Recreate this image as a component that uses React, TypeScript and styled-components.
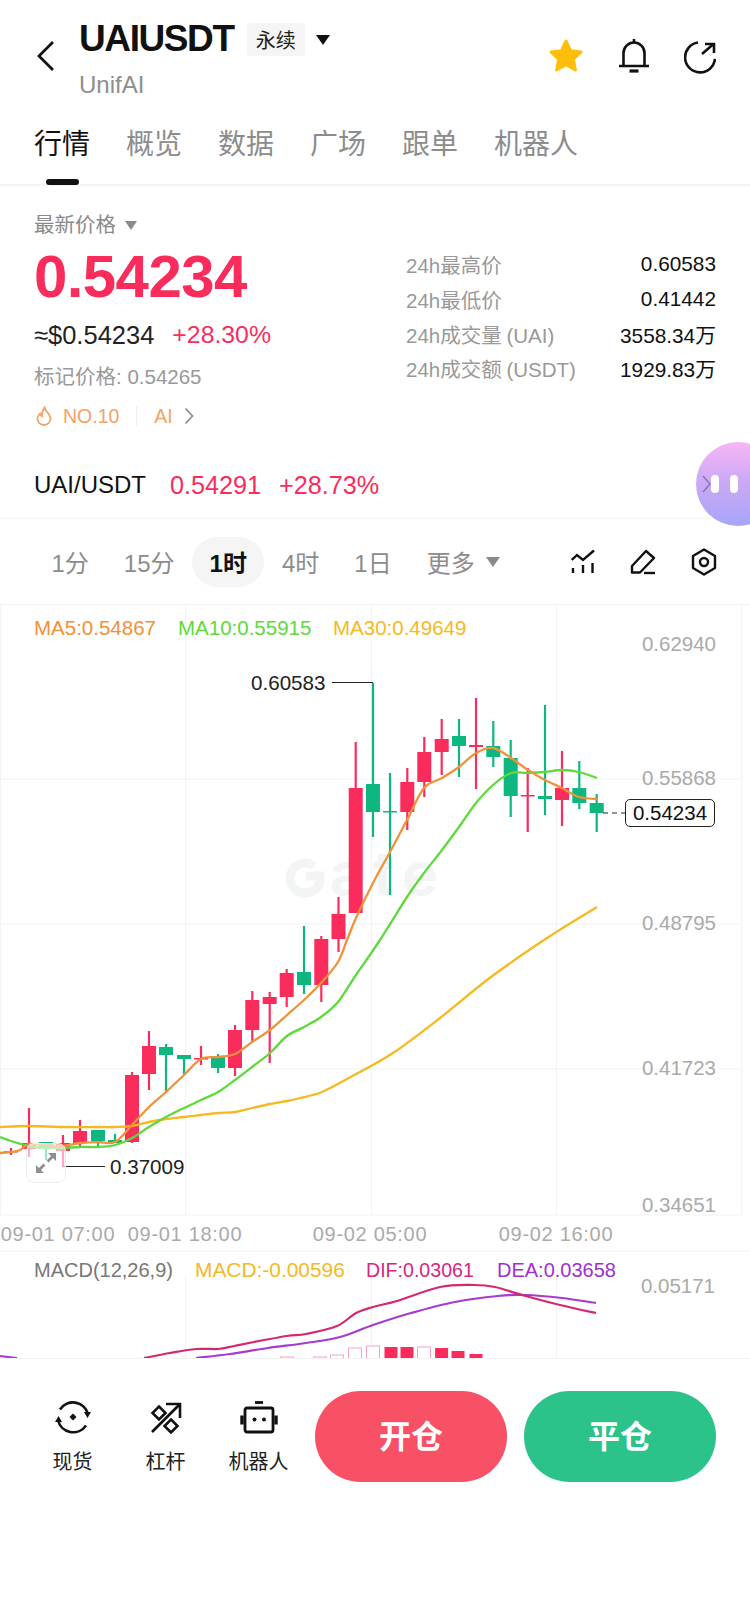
import React from "react";
import styled, { createGlobalStyle } from "styled-components";

const RED = "#f92c5c";
const GREEN = "#0db77f";
const CJK = `"Liberation Sans", "Noto Sans CJK SC", sans-serif`;

const GlobalStyle = createGlobalStyle`
  html, body { margin: 0; padding: 0; background: #fff; }
  body { font-family: ${CJK}; color: #111; }
`;

// x, wick top, wick bottom, body top, body bottom, up?
type Candle = [number, number, number, number, number, boolean];
const candles: Candle[] = [
  [11, 1148, 1155, 1151, 1152.5, true],
  [29, 1108, 1157, 1143, 1149, true],
  [46, 1142, 1160, 1142, 1149, false],
  [63, 1135, 1167, 1143, 1151, true],
  [80, 1120, 1147, 1131, 1143, true],
  [98, 1130, 1146, 1130, 1141, false],
  [115, 1134, 1143, 1140, 1143, false],
  [132, 1072, 1143, 1075, 1142, true],
  [149, 1031, 1090, 1046, 1074, true],
  [166, 1044, 1092, 1047, 1055, false],
  [184, 1055, 1074, 1055, 1059, false],
  [201, 1046, 1065, 1058, 1059.5, true],
  [218, 1054, 1073, 1057, 1068, false],
  [235, 1025, 1076, 1030, 1068, true],
  [252.3, 991, 1042, 1000, 1030, true],
  [269.7, 992, 1063, 997, 1004, true],
  [286.7, 969, 1007, 973, 997, true],
  [304, 926, 994, 972, 985, false],
  [321.3, 936, 1002, 939, 985, true],
  [338.5, 897, 952, 914, 939, true],
  [355.7, 742, 913, 788, 913, true],
  [373, 683, 837, 784, 812, false],
  [390, 773, 895, 811, 812.5, false],
  [407.3, 768, 830, 782, 812, true],
  [424.3, 737, 797, 752, 782, true],
  [441.7, 719, 775, 739, 752, true],
  [459, 719, 777, 736, 746, false],
  [476, 698, 789, 745, 747, true],
  [493.3, 721, 767, 746, 757, false],
  [510.7, 740, 817, 758, 796, false],
  [527.7, 768, 832, 795, 796.5, true],
  [545, 705, 815, 796, 799, false],
  [562, 751, 826, 788, 800, true],
  [579.3, 761, 809, 788, 803, false],
  [596.7, 794, 832, 803, 813, false],
];

const ma5 =
  "0,1153 11,1152 20,1150 29,1144 46,1145 63,1146 80,1143 98,1142 115,1142 132,1125 149,1107 166,1092 184,1075 201,1059 218,1057 235,1054 252,1042 270,1030 287,1015 304,1000 321,983 338,962 347,940 356,918 373,883 390,852 407,820 424,788 442,778 459,767 476,753 493,748 511,758 528,770 545,780 562,788 579,797 597,799";
const ma10 =
  "0,1137 11,1141 29,1146 46,1148 63,1148 80,1147 98,1147 115,1145 132,1138 149,1127 166,1117 184,1108 201,1100 218,1092 235,1080 252,1067 270,1053 287,1036 304,1027 321,1017 338,1002 356,975 380,940 407,897 424,873 442,850 459,827 476,803 493,785 511,773 528,773 545,772 562,770 579,772 597,778";
const ma30 =
  "0,1127 29,1126 63,1127 98,1127 115,1127 132,1126 149,1122 166,1119 184,1117 201,1115 218,1113 235,1112 252,1108 270,1104 287,1101 300,1098 322,1092 347,1079 393,1053 440,1018 491,977 547,938 597,907";
const dif =
  "144,1358 170,1353 196,1349 218,1349 234,1346 254,1342 287,1336 306,1334 337,1326 356,1313 373,1307 397,1301 440,1287 474,1285 495,1287 522,1295 560,1305 596,1313";
const dea =
  "196,1358 230,1354 268,1348 306,1343 340,1337 373,1325 411,1313 455,1302 498,1296 526,1295 562,1298 596,1303";

// turns "x,y x,y" into a smooth curve through the points
function smooth(points: string) {
  const p = points.split(" ").map((s) => s.split(",").map(Number));
  let d = `M${p[0][0]} ${p[0][1]}`;
  for (let i = 0; i < p.length - 1; i++) {
    const a = p[Math.max(i - 1, 0)];
    const b = p[i];
    const c = p[i + 1];
    const e = p[Math.min(i + 2, p.length - 1)];
    const c1x = b[0] + (c[0] - a[0]) / 6;
    const c1y = b[1] + (c[1] - a[1]) / 6;
    const c2x = c[0] - (e[0] - b[0]) / 6;
    const c2y = c[1] - (e[1] - b[1]) / 6;
    d += `C${c1x.toFixed(1)} ${c1y.toFixed(1)} ${c2x.toFixed(1)} ${c2y.toFixed(1)} ${c[0]} ${c[1]}`;
  }
  return d;
}

const bars: [number, number, boolean][] = [
  [287, 1357, false],
  [320, 1357, false],
  [337, 1355, false],
  [355, 1348, false],
  [373, 1346, false],
  [391, 1347, true],
  [407, 1347, true],
  [424, 1347, false],
  [441.6, 1348, true],
  [458, 1351, true],
  [476, 1354, true],
];

const priceTicks: [number, string][] = [
  [645, "0.62940"],
  [779, "0.55868"],
  [924, "0.48795"],
  [1069, "0.41723"],
  [1206, "0.34651"],
];

const timeTicks: [number, string][] = [
  [58, "09-01 07:00"],
  [185, "09-01 18:00"],
  [370, "09-02 05:00"],
  [556, "09-02 16:00"],
];

const stats = [
  ["24h最高价", "0.60583"],
  ["24h最低价", "0.41442"],
  ["24h成交量 (UAI)", "3558.34万"],
  ["24h成交额 (USDT)", "1929.83万"],
];

function App() {
  return (
    <Page>
      <GlobalStyle />
      <Header>
        <BackIcon viewBox="0 0 17 30">
          <polyline points="16,1 2,15 16,29" fill="none" stroke="#111" strokeWidth="2.8" />
        </BackIcon>
        <TitleColumn>
          <TitleRow>
            <Title>UAIUSDT</Title>
            <Tag>永续</Tag>
            <Caret $size={14} $color="#111" $gap={11} />
          </TitleRow>
          <SubTitle>UnifAI</SubTitle>
        </TitleColumn>
        <Actions>
          <svg width="36" height="36" viewBox="0 0 36 36">
            <polygon
              points="18,3 22.6,12.8 33,14 25.4,21.2 27.4,32 18,26.6 8.6,32 10.6,21.2 3,14 13.4,12.8"
              fill="#ffbe0b"
              stroke="#ffbe0b"
              strokeWidth="3"
              strokeLinejoin="round"
            />
          </svg>
          <svg width="30" height="36" viewBox="0 0 30 36" fill="none" stroke="#111" strokeWidth="2.6">
            <path d="M4.5 28V15a10.5 10.5 0 0 1 21 0V28" />
            <path d="M0.5 28h29" strokeLinecap="round" />
            <path d="M15 1v4" />
            <path d="M10.5 33h9" strokeWidth="3.2" />
          </svg>
          <svg width="32" height="36" viewBox="0 0 32 36" fill="none" stroke="#111" strokeWidth="2.6">
            <path d="M14 4.5A15 15 0 1 0 31 21" />
            <path d="M18 16L29.5 6" />
            <path d="M21 6h9v9" />
          </svg>
        </Actions>
      </Header>

      <MainTabs>
        <MainTab $active>行情</MainTab>
        <MainTab>概览</MainTab>
        <MainTab>数据</MainTab>
        <MainTab>广场</MainTab>
        <MainTab>跟单</MainTab>
        <MainTab>机器人</MainTab>
      </MainTabs>

      <PriceSection>
        <PriceColumn>
          <PriceLabel>
            最新价格
            <Caret $size={13} $color="#8a8a8a" $gap={9} />
          </PriceLabel>
          <BigPrice>0.54234</BigPrice>
          <FiatRow>
            <span>≈$0.54234</span>
            <Change>+28.30%</Change>
          </FiatRow>
          <MarkPrice>标记价格: 0.54265</MarkPrice>
          <TagRow>
            <svg width="16" height="20" viewBox="0 0 16 20" fill="none" stroke="#f2a266" strokeWidth="1.8">
              <path d="M8.5 1.5C9 5 14.5 8 14.5 12.8A6.5 6.2 0 0 1 1.5 12.8C1.5 10.5 2.6 9 4 7.6C4.6 9 5.2 9.8 6 10.2C6 7 6.6 4 8.5 1.5Z" />
            </svg>
            <HotText>NO.10</HotText>
            <TagDivider />
            <HotText>AI</HotText>
            <svg width="10" height="18" viewBox="0 0 10 18" fill="none" stroke="#888" strokeWidth="1.6">
              <polyline points="1.5,1.5 8.5,9 1.5,16.5" />
            </svg>
          </TagRow>
        </PriceColumn>
        <StatList>
          {stats.map(([label, value]) => (
            <StatRow key={label}>
              <StatLabel>{label}</StatLabel>
              <StatValue>{value}</StatValue>
            </StatRow>
          ))}
        </StatList>
      </PriceSection>

      <PairRow>
        <PairName>UAI/USDT</PairName>
        <PairValue>0.54291</PairValue>
        <PairValue>+28.73%</PairValue>
      </PairRow>

      <Bubble>
        <svg width="9" height="18" viewBox="0 0 9 18" fill="none" stroke="#7d7aa8" strokeWidth="1.4">
          <polyline points="1,1 8,9 1,17" />
        </svg>
        <BubbleEye />
        <BubbleEye />
      </Bubble>

      <PeriodBar>
        <Period>1分</Period>
        <Period>15分</Period>
        <Period $active>1时</Period>
        <Period>4时</Period>
        <Period>1日</Period>
        <Period>
          更多
          <Caret $size={14} $color="#8a8a8a" $gap={11} />
        </Period>
        <Tools>
          <svg width="24" height="26" viewBox="0 0 24 26" fill="none" stroke="#111" strokeWidth="2.4">
            <polyline points="0.8,11 6,6 12,11 23,1.5" />
            <path d="M2 19v5M12 16v8M21.5 14v10" />
          </svg>
          <svg width="28" height="28" viewBox="0 0 28 28" fill="none" stroke="#111" strokeWidth="2.4">
            <path d="M3 18L17 3l8 7-14 14.5H3z" strokeLinejoin="round" />
            <path d="M15 25h11" />
          </svg>
          <svg width="26" height="28" viewBox="0 0 26 28" fill="none" stroke="#111" strokeWidth="2.4">
            <path d="M13 1.5L24 8v12l-11 6.5L2 20V8z" strokeLinejoin="round" />
            <circle cx="13" cy="14" r="4" />
          </svg>
        </Tools>
      </PeriodBar>

      <ChartArea>
        <svg width="750" height="754" viewBox="0 604 750 754" style={{ display: "block" }}>
          <g stroke="#f3f3f3" strokeWidth="1">
            <path d="M0 604.5H750M0 779H742M0 924H742M0 1069H742M0 1215H742M0 1251H750" />
            <path d="M0.5 604V1215M185.5 604V1215M371.5 604V1215M556.5 604V1215M741.5 604V1215" />
            <path d="M185.5 1275V1358M371.5 1275V1358M556.5 1275V1358" />
          </g>

          <path
            d="M314 866A15 15 0 1 0 320 876H306"
            fill="none"
            stroke="#f3f4f5"
            strokeWidth="9"
          />
          <WatermarkText x="330" y="895">
            ate
          </WatermarkText>

          {candles.map(([x, wt, wb, bt, bb, up]) => (
            <g key={x} fill={up ? RED : GREEN}>
              <rect x={x - 1.1} y={wt} width="2.2" height={wb - wt} />
              <rect x={x - 7} y={bt} width="14" height={bb - bt} />
            </g>
          ))}

          <g fill="none" strokeWidth="2.3">
            <path d={smooth(ma30)} stroke="#f5b921" />
            <path d={smooth(ma10)} stroke="#5fd93c" />
            <path d={smooth(ma5)} stroke="#f0923a" />
          </g>

          <g stroke="#222" strokeWidth="1.2" fill="none">
            <polyline points="332,682.5 373,682.5" />
            <polyline points="63,1166.5 105,1166.5" />
            <polyline points="603,813 625,813" strokeDasharray="5 4" />
          </g>
          <AnnotationText x="251" y="690">
            0.60583
          </AnnotationText>
          <AnnotationText x="110" y="1174">
            0.37009
          </AnnotationText>

          {priceTicks.map(([y, label]) => (
            <AxisText key={label} x="716" y={y + 6} textAnchor="end">
              {label}
            </AxisText>
          ))}
          {timeTicks.map(([x, label]) => (
            <TimeText key={label} x={x} y="1241" textAnchor="middle">
              {label}
            </TimeText>
          ))}
          <AxisText x="715" y="1293" textAnchor="end">
            0.05171
          </AxisText>

          <g fill="none" strokeWidth="2.2">
            <path d="M0 1356L17 1358" stroke="#a63ad2" />
            <path d={smooth(dea)} stroke="#a63ad2" />
            <path d={smooth(dif)} stroke="#d6286f" />
          </g>
          {bars.map(([x, top, solid]) => (
            <rect
              key={x}
              x={x - 6.5}
              y={top}
              width="13"
              height={1359 - top}
              fill={solid ? RED : "#fff"}
              stroke={solid ? "none" : "#f7a6ba"}
            />
          ))}
        </svg>

        <Legend $top={12}>
          <LegendItem $color="#f0923a" $width={144}>MA5:0.54867</LegendItem>
          <LegendItem $color="#5fd93c" $width={155}>MA10:0.55915</LegendItem>
          <LegendItem $color="#f5b921">MA30:0.49649</LegendItem>
        </Legend>

        <Legend $top={654}>
          <LegendItem $color="#777" $width={161} $size={20}>MACD(12,26,9)</LegendItem>
          <LegendItem $color="#f5b921" $width={171} $size={20.9}>MACD:-0.00596</LegendItem>
          <LegendItem $color="#d6267f" $width={131} $size={19.6}>DIF:0.03061</LegendItem>
          <LegendItem $color="#a030d0" $size={20}>DEA:0.03658</LegendItem>
        </Legend>

        <LastPrice>0.54234</LastPrice>

        <ExpandButton>
          <svg width="20" height="20" viewBox="0 0 20 20" fill="#8f8f8f">
            <path d="M12 0h8v8l-3-3-4.4 4.4-2-2L15 3z" />
            <path d="M8 20H0v-8l3 3 4.4-4.4 2 2L5 17z" />
          </svg>
        </ExpandButton>
      </ChartArea>

      <BottomPanel>
        <Shortcut>
          <svg width="36" height="36" viewBox="0 0 36 36" fill="none" stroke="#111" strokeWidth="2.6">
            <path d="M5 9.5A15.5 15.5 0 0 1 33 14" />
            <path d="M31 25.5A15.5 15.5 0 0 1 3 20" />
            <path d="M29 12h7l-3.5 6zM0 22h7l-3.5-6z" fill="#111" stroke="none" />
            <path d="M18 13.5l3.5 3.5-3.5 3.5-3.5-3.5z" fill="#111" stroke="none" />
          </svg>
          <ShortcutLabel>现货</ShortcutLabel>
        </Shortcut>
        <Shortcut>
          <svg width="36" height="36" viewBox="0 0 36 36" fill="none" stroke="#111" strokeWidth="2.6">
            <path d="M4 32L31 5" />
            <path d="M18 4h14v14" />
            <path d="M11 6.5l6.5 6.5-6.5 6.5L4.5 13z" />
            <path d="M23 19.5l6.5 6.5-6.5 6.5-6.5-6.5z" />
          </svg>
          <ShortcutLabel>杠杆</ShortcutLabel>
        </Shortcut>
        <Shortcut>
          <svg width="38" height="36" viewBox="0 0 38 36" fill="none" stroke="#111" strokeWidth="2.8">
            <path d="M15 2.5h8" />
            <rect x="5" y="8" width="28" height="24" rx="2" />
            <path d="M2 15.5v9M36 15.5v9" strokeWidth="3.4" />
            <circle cx="14.5" cy="19.5" r="2" fill="#111" stroke="none" />
            <circle cx="24" cy="19.5" r="2" fill="#111" stroke="none" />
          </svg>
          <ShortcutLabel>机器人</ShortcutLabel>
        </Shortcut>
        <TradeButton $color="#f85065" $left={10}>开仓</TradeButton>
        <TradeButton $color="#2cc38a" $left={17}>平仓</TradeButton>
      </BottomPanel>
    </Page>
  );
}

const Page = styled.div`
  position: relative;
  width: 750px;
  height: 1604px;
  overflow: hidden;
  background: #fff;
`;

const Header = styled.header`
  display: flex;
  box-sizing: border-box;
  height: 115px;
  padding: 23px 34px 0 37px;
`;

const BackIcon = styled.svg`
  width: 17px;
  height: 30px;
  margin: 18px 25px 0 0;
`;

const TitleColumn = styled.div`
  display: flex;
  flex-direction: column;
`;

const TitleRow = styled.div`
  display: flex;
  align-items: center;
  height: 33px;
`;

const Title = styled.div`
  margin-bottom: 3px;
  font-size: 37px;
  font-weight: 700;
  line-height: 33px;
  letter-spacing: -1.4px;
`;

const Tag = styled.span`
  display: flex;
  align-items: center;
  justify-content: center;
  width: 58px;
  height: 33px;
  margin-left: 13px;
  border-radius: 4px;
  background: #f5f5f5;
  font-size: 20px;
  color: #222;
`;

const Caret = styled.i<{ $size: number; $color: string; $gap: number }>`
  display: inline-block;
  width: 0;
  height: 0;
  margin-left: ${(p) => p.$gap}px;
  border-left: ${(p) => p.$size / 2}px solid transparent;
  border-right: ${(p) => p.$size / 2}px solid transparent;
  border-top: ${(p) => p.$size * 0.72}px solid ${(p) => p.$color};
`;

const SubTitle = styled.div`
  margin-top: 17px;
  font-size: 24px;
  line-height: 24px;
  color: #8e8e8e;
`;

const Actions = styled.div`
  display: flex;
  gap: 35px;
  margin: 15px 0 0 auto;
  height: 36px;
`;

const MainTabs = styled.nav`
  display: flex;
  gap: 36px;
  box-sizing: border-box;
  height: 71px;
  padding: 11px 0 0 34px;
  border-bottom: 2px solid #f4f4f4;
`;

const MainTab = styled.div<{ $active?: boolean }>`
  position: relative;
  font-size: 28px;
  line-height: 38px;
  color: ${(p) => (p.$active ? "#111" : "#8c8c8c")};

  ${(p) =>
    p.$active &&
    `&::after {
      content: "";
      position: absolute;
      left: 12px;
      top: 53px;
      width: 33px;
      height: 6px;
      border-radius: 3px;
      background: #111;
    }`}
`;

const PriceSection = styled.section`
  display: flex;
  box-sizing: border-box;
  height: 267px;
  padding: 27px 34px 0;
`;

const PriceColumn = styled.div`
  width: 372px;
`;

const PriceLabel = styled.div`
  display: flex;
  align-items: center;
  font-size: 20.5px;
  line-height: 24px;
  color: #8a8a8a;
`;

const BigPrice = styled.div`
  margin-top: 10px;
  font-size: 60px;
  font-weight: 700;
  line-height: 60px;
  letter-spacing: -0.6px;
  color: ${RED};
`;

const FiatRow = styled.div`
  display: flex;
  gap: 18px;
  margin-top: 14px;
  font-size: 25.5px;
  line-height: 28px;
  color: #222;
`;

const Change = styled.span`
  font-size: 24.8px;
  color: ${RED};
`;

const MarkPrice = styled.div`
  margin-top: 16px;
  font-size: 20.5px;
  line-height: 24px;
  color: #999;
`;

const TagRow = styled.div`
  display: flex;
  align-items: center;
  gap: 11px;
  margin: 15px 0 0 2px;
  height: 24px;
`;

const HotText = styled.span`
  font-size: 19.5px;
  line-height: 24px;
  color: #f2a266;
`;

const TagDivider = styled.span`
  width: 1px;
  height: 20px;
  margin: 0 6px;
  background: #efefef;
`;

const StatList = styled.div`
  width: 310px;
  padding-top: 34px;
`;

const StatRow = styled.div`
  display: flex;
  justify-content: space-between;
  align-items: center;
  height: 34.7px;
`;

const StatLabel = styled.span`
  font-size: 20.5px;
  word-spacing: -1px;
  color: #999;
`;

const StatValue = styled.span`
  font-size: 20.8px;
  color: #111;
`;

const PairRow = styled.section`
  display: flex;
  align-items: center;
  gap: 18px;
  box-sizing: border-box;
  height: 66px;
  padding: 0 34px 1px;
  border-bottom: 1px solid #f4f4f4;
`;

const PairName = styled.span`
  width: 118px;
  font-size: 24px;
  color: #111;
`;

const PairValue = styled.span`
  font-size: 25.2px;
  color: ${RED};
`;

const Bubble = styled.div`
  position: absolute;
  left: 696px;
  top: 442px;
  display: flex;
  align-items: center;
  box-sizing: border-box;
  width: 84px;
  height: 84px;
  padding-left: 6px;
  border-radius: 50%;
  background: linear-gradient(180deg, #f6b6f6 0%, #c9a8f6 50%, #a6a6f8 100%);
`;

const BubbleEye = styled.i`
  display: block;
  flex: none;
  width: 8px;
  height: 18px;
  margin-right: 11px;
  border-radius: 4px;
  background: #fff;
`;

const PeriodBar = styled.div`
  display: flex;
  align-items: center;
  box-sizing: border-box;
  height: 85px;
  padding: 0 33px 0 34px;
`;

const Period = styled.div<{ $active?: boolean }>`
  display: flex;
  align-items: center;
  height: 50px;
  padding: 0 17.5px;
  border-radius: 25px;
  background: ${(p) => (p.$active ? "#f5f5f5" : "transparent")};
  font-size: 24px;
  font-weight: ${(p) => (p.$active ? 700 : 400)};
  color: ${(p) => (p.$active ? "#111" : "#8c8c8c")};
`;

const Tools = styled.div`
  display: flex;
  align-items: center;
  gap: 34px;
  margin-left: auto;
`;

const ChartArea = styled.div`
  position: relative;
  height: 754px;
`;

const WatermarkText = styled.text`
  font-family: Inter, sans-serif;
  font-size: 60px;
  font-weight: 700;
  letter-spacing: 8px;
  fill: #f3f4f5;
`;

const AnnotationText = styled.text`
  font-size: 20.6px;
  fill: #222;
`;

const AxisText = styled.text`
  font-size: 20.5px;
  fill: #aaa;
`;

const TimeText = styled.text`
  font-size: 20px;
  letter-spacing: 0.7px;
  fill: #aaa;
`;

const Legend = styled.div<{ $top: number }>`
  position: absolute;
  left: 34px;
  top: ${(p) => p.$top}px;
  display: flex;
  line-height: 24px;
`;

const LegendItem = styled.span<{ $color: string; $width?: number; $size?: number }>`
  width: ${(p) => (p.$width ? `${p.$width}px` : "auto")};
  font-size: ${(p) => p.$size ?? 20.5}px;
  color: ${(p) => p.$color};
  white-space: nowrap;
`;

const LastPrice = styled.div`
  position: absolute;
  left: 625px;
  top: 195px;
  display: flex;
  align-items: center;
  justify-content: center;
  box-sizing: border-box;
  width: 90px;
  height: 28px;
  border: 1px solid #222;
  border-radius: 5px;
  background: #fff;
  font-size: 20.5px;
  color: #111;
`;

const ExpandButton = styled.div`
  position: absolute;
  left: 26px;
  top: 539px;
  display: flex;
  align-items: center;
  justify-content: center;
  box-sizing: border-box;
  width: 40px;
  height: 40px;
  border: 1px solid #eee;
  border-radius: 8px;
  background: rgba(255, 255, 255, 0.6);
`;

const BottomPanel = styled.footer`
  display: flex;
  align-items: flex-start;
  box-sizing: border-box;
  height: 246px;
  padding: 32px 0 0 26px;
  border-top: 1px solid #f2f2f2;
  background: #fff;
`;

const Shortcut = styled.div`
  display: flex;
  flex-direction: column;
  align-items: center;
  width: 93px;
  padding-top: 9px;
`;

const ShortcutLabel = styled.span`
  margin-top: 14px;
  font-size: 20px;
  line-height: 24px;
  color: #222;
`;

const TradeButton = styled.div<{ $color: string; $left: number }>`
  display: flex;
  align-items: center;
  justify-content: center;
  box-sizing: border-box;
  width: 192px;
  height: 91px;
  margin-left: ${(p) => p.$left}px;
  padding-bottom: 6px;
  border-radius: 46px;
  background: ${(p) => p.$color};
  font-size: 32px;
  font-weight: 700;
  color: #fff;
`;

export default App;
